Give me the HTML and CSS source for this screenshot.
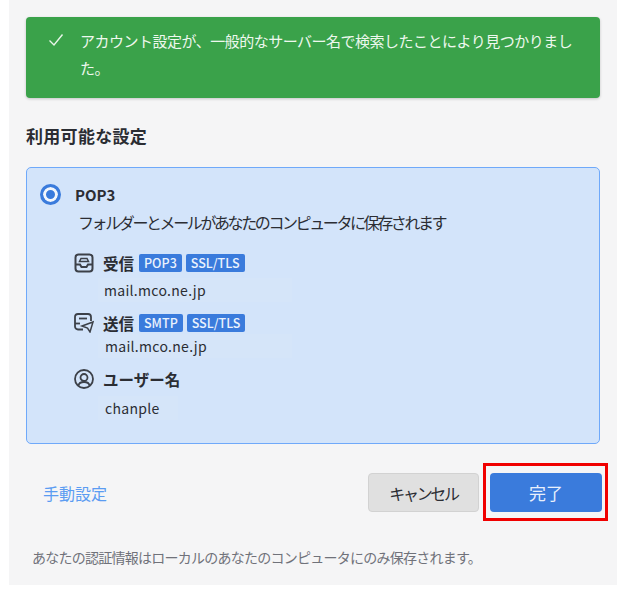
FILE: index.html
```html
<!DOCTYPE html>
<html lang="ja">
<head>
    <meta charset="UTF-8">
    <meta name="viewport" content="width=device-width, initial-scale=1.0">
    <title>アカウント設定</title>
    <link rel="stylesheet" href="styles.css">
</head>
<body>
    <div class="panel">
        <div class="notice">
            <svg class="notice-check" width="16" height="14" viewBox="0 0 16 14" fill="none" stroke="#e8f5e9" stroke-width="1.4">
                <path d="M1.5 7.5 L6 12 L14.5 1.5"/>
            </svg>
            <p class="notice-text">アカウント設定が、一般的なサーバー名で検索したことにより見つかりました。</p>
        </div>

        <h2 class="section-title">利用可能な設定</h2>

        <div class="config-card">
            <div class="protocol">
                <span class="radio"></span>
                <span class="protocol-name">POP3</span>
            </div>
            <p class="protocol-desc">フォルダーとメールがあなたのコンピュータに保存されます</p>

            <div class="server-row row-in">
                <svg class="row-icon" width="20" height="20" viewBox="0 0 20 20" fill="none" stroke="#3c4048" stroke-width="2">
                    <rect x="1.500" y="1.500" width="17" height="17" rx="3"/>
                    <path d="M1.500 11.500 H6 L7.500 14 H12.500 L14 11.500 H18.500"/>
                    <path d="M5.500 8.500 L7 5.500 H13 L14.500 8.500 Z" stroke-width="1.500"/>
                </svg>
                <span class="row-label">受信</span>
                <span class="badge">POP3</span>
                <span class="badge">SSL/TLS</span>
            </div>
            <div class="row-value value-in">mail.mco.ne.jp</div>

            <div class="server-row row-out">
                <svg class="row-icon" width="20" height="20" viewBox="0 0 20 20" fill="none" stroke="#3c4048" stroke-width="1.800">
                    <path d="M9 16.500 H4 A3 3 0 0 1 1 13.500 V4 A3 3 0 0 1 4 1 H14 A3 3 0 0 1 17 4 V8"/>
                    <path d="M1 10.500 H6"/>
                    <path d="M5 5.500 H13"/>
                    <path d="M8 13 L19 9 L16 19 L13.500 15 Z" stroke-width="1.500"/>
                </svg>
                <span class="row-label">送信</span>
                <span class="badge">SMTP</span>
                <span class="badge">SSL/TLS</span>
            </div>
            <div class="row-value value-out">mail.mco.ne.jp</div>

            <div class="server-row row-user">
                <svg class="row-icon" width="20" height="20" viewBox="0 0 20 20" fill="none" stroke="#3c4048" stroke-width="1.800">
                    <circle cx="10" cy="10" r="9"/>
                    <circle cx="10" cy="8.500" r="3.500"/>
                    <path d="M4.500 16.500 C5 13.500 7 13 10 13 C13 13 15 13.500 15.500 16.500"/>
                </svg>
                <span class="row-label">ユーザー名</span>
            </div>
            <div class="row-value value-user">chanple</div>
        </div>

        <div class="actions">
            <a class="manual-link" href="#">手動設定</a>
            <div class="buttons">
                <button class="btn btn-cancel">キャンセル</button>
                <button class="btn btn-done">完了</button>
                <span class="highlight"></span>
            </div>
        </div>

        <p class="footnote">あなたの認証情報はローカルのあなたのコンピュータにのみ保存されます。</p>
    </div>
</body>
</html>
```

FILE: styles.css
```css
* {
    box-sizing: border-box;
    margin: 0;
    padding: 0;
}

body {
    background: white;
    font-family: "Noto Sans CJK JP", "Noto Sans", sans-serif;
    color: #2b2d33;
}

.panel {
    width: 608px;
    height: 585px;
    margin-left: 9px;
    padding: 17px 17px 0;
    background: #f5f5f6;
}

.notice {
    display: flex;
    height: 81px;
    padding: 10px 0 0 22px;
    background: #3aa24a;
    border-radius: 4px;
    box-shadow: 0 1px 3px rgba(0, 0, 0, 0.2);
}

.notice-check {
    flex: none;
    margin-top: 6px;
}

.notice-text {
    margin-left: 16px;
    width: 500px;
    font-size: 15px;
    line-height: 27px;
    letter-spacing: -0.5px;
    color: #eef8ee;
}

.section-title {
    margin-top: 26px;
    font-size: 17px;
    line-height: 24px;
    font-weight: 700;
    letter-spacing: 0.3px;
}

.config-card {
    height: 277px;
    margin-top: 19px;
    padding: 14px 0 0 13px;
    background: #d3e4fa;
    border: 1px solid #6fa9fa;
    border-radius: 5px;
}

.protocol {
    display: flex;
    align-items: center;
    height: 24px;
}

.radio {
    width: 21px;
    height: 21px;
    border: 3px solid #3a7bdc;
    border-radius: 50%;
    background: #3a7bdc;
    box-shadow: inset 0 0 0 3px #f2f6fc;
}

.protocol-name {
    margin-left: 14px;
    font-size: 15px;
    font-weight: 700;
}

.protocol-desc {
    margin: 4px 0 0 38px;
    font-size: 16px;
    line-height: 24px;
    letter-spacing: -2.4px;
}

.server-row {
    display: flex;
    align-items: center;
    height: 20px;
}

.row-in {
    margin-top: 19px;
}

.row-out {
    margin-top: 11px;
}

.row-user {
    margin-top: 11px;
}

.row-icon {
    flex: none;
    margin-left: 34px;
    width: 20px;
}

.row-label {
    margin-left: 9px;
    font-size: 15.500px;
    font-weight: 700;
}

.badge {
    margin-left: 4px;
    padding: 0 5px;
    height: 18px;
    line-height: 18px;
    font-size: 12.500px;
    font-weight: 500;
    color: #eaf2fd;
    background: #3a7bdc;
    border-radius: 2px;
}

.row-label + .badge {
    margin-left: 5px;
}

.row-value {
    margin-left: 58px;
    width: 194px;
    height: 24px;
    padding-left: 6px;
    font-size: 14px;
    line-height: 24px;
    letter-spacing: 0.3px;
    background: rgba(220, 232, 250, 0.3);
}

.value-in {
    margin-top: 5px;
}

.value-out {
    margin-top: 1px;
    padding-left: 7px;
}

.value-user {
    width: 80px;
    margin-top: 7px;
    padding-left: 7px;
}

.actions {
    display: flex;
    justify-content: space-between;
    align-items: center;
    margin-top: 29px;
    padding-left: 17px;
}

.manual-link {
    font-size: 16px;
    color: #5b9cf2;
    text-decoration: none;
}

.buttons {
    position: relative;
    display: flex;
    gap: 11px;
    margin-right: -2px;
}

.btn {
    height: 39px;
    width: 112px;
    border-radius: 4px;
    font-family: inherit;
    font-size: 16px;
}

.btn-cancel {
    width: 111px;
    background: #e0e0e0;
    border: 1px solid #d2d2d2;
    color: #2b2d33;
    letter-spacing: -2.300px;
}

.btn-done {
    background: #3a7bdc;
    border: none;
    color: #e8f0fc;
    font-size: 17px;
}

.highlight {
    position: absolute;
    top: -10px;
    right: -6px;
    width: 125px;
    height: 58px;
    border: 3px solid #f00000;
}

.footnote {
    margin-top: 35px;
    margin-left: 6px;
    font-size: 14px;
    line-height: 20px;
    letter-spacing: -0.750px;
    color: #70727a;
}
```
